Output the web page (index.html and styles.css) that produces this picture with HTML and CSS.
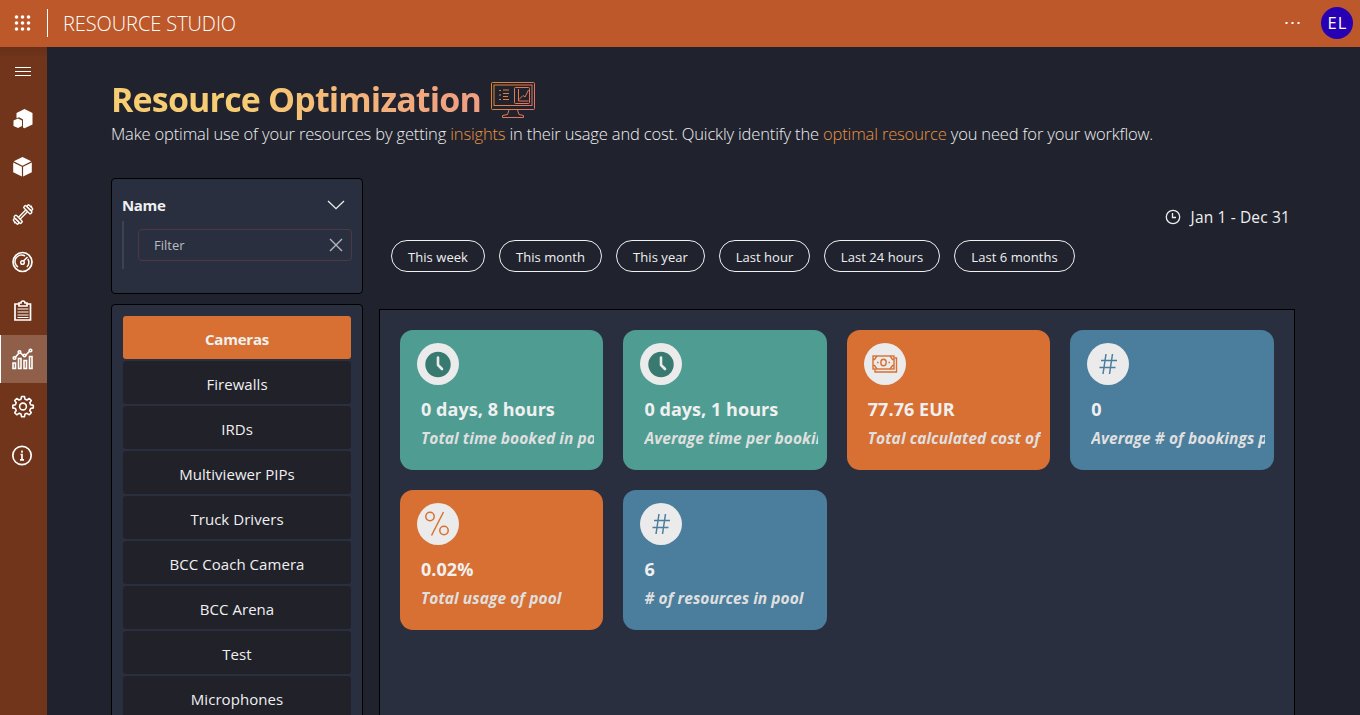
FILE: index.html
```html
<!DOCTYPE html>
<html lang="en">
<head>
<meta charset="utf-8">
<title>Resource Studio</title>
<link rel="stylesheet" href="styles.css">
</head>
<body>
<header class="topbar">
  <svg class="waffle" width="18" height="18" viewBox="0 0 18 18" fill="#fff"><circle cx="2.500" cy="2" r="1.800"/><circle cx="8.500" cy="2" r="1.800"/><circle cx="14.500" cy="2" r="1.800"/><circle cx="2.500" cy="8" r="1.800"/><circle cx="8.500" cy="8" r="1.800"/><circle cx="14.500" cy="8" r="1.800"/><circle cx="2.500" cy="14" r="1.800"/><circle cx="8.500" cy="14" r="1.800"/><circle cx="14.500" cy="14" r="1.800"/></svg>
  <span class="rule"></span>
  <span class="brand">RESOURCE STUDIO</span>
  <svg class="more" width="16" height="2" viewBox="0 0 16 2" fill="#fff"><path d="M.5 0h2v2h-2zM6.500 0h2v2h-2zM12.500 0h2v2h-2z"/></svg>
  <span class="avatar">EL</span>
</header>
<div class="shell">
  <nav class="rail">
    <a class="rail-item"><svg width="24" height="24" viewBox="0 0 24 24" stroke="#fff" stroke-width="1"><path d="M4 8.500h16M4 12.500h16M4 16.500h16"/></svg></a>
    <a class="rail-item"><svg width="24" height="24" viewBox="0 0 24 24" fill="#fff"><path d="M13.500 2l8 4v11.500l-8 3.700-1.500-.7v-8L8 10.300l-2.500 1V6z"/><path d="M7 11.400l4 2v5.500l-4 2-4.500-2v-5.500z"/></svg></a>
    <a class="rail-item"><svg width="24" height="24" viewBox="0 0 24 24" fill="#fff"><path d="M11.500 2l8.800 4.300-8.800 4.400-8.800-4.400zM2.200 7.400l8.700 4.400v9.700l-8.700-4.300zM20.800 7.400l-8.700 4.400v9.700l8.700-4.300z"/></svg></a>
    <a class="rail-item"><svg width="24" height="24" viewBox="0 0 24 24"><g transform="translate(12 11.500) rotate(-45)" fill="none" stroke="#fff" stroke-width="1.400" stroke-linejoin="round"><path d="M-5 -1.200H5M-5 1.200H5"/><rect x="-8.300" y="-4.800" width="3" height="9.600" rx="1"/><rect x="-11" y="-3.200" width="2.700" height="6.400" rx="1"/><rect x="5.300" y="-4.800" width="3" height="9.600" rx="1"/><rect x="8.300" y="-3.200" width="2.700" height="6.400" rx="1"/><path d="M-12.500 0h1.500M11 0h1.500"/></g></svg></a>
    <a class="rail-item"><svg width="24" height="24" viewBox="0 0 24 24" fill="none" stroke="#fff" stroke-width="1.500"><circle cx="11.500" cy="11" r="9.500" stroke-width="1.700"/><path d="M7 16A6.500 6.500 0 0 1 14 5M16.800 8a6.500 6.500 0 0 1-1 8M12.500 10L16.500 6"/><circle cx="11.500" cy="11.500" r="1.800"/></svg></a>
    <a class="rail-item"><svg width="24" height="24" viewBox="0 0 24 24" fill="none" stroke="#fff" stroke-width="1.700"><path d="M8 5H4v16h15.500V5h-4M8 7V4h2a2 2 0 0 1 4 0h2v3z"/><path d="M6.500 10h11M6.500 13h11M6.500 16h11M6.500 18.500h11" stroke-width="1.200"/></svg></a>
    <a class="rail-item active"><svg width="24" height="24" viewBox="0 0 24 24" fill="none" stroke="#fff" stroke-width="1.600"><path d="M2 16h2.500v5.500H2zM7.500 11.500H10v10H7.500zM13 13.500h2.500v8H13zM18.500 9.500H21v12h-2.500zM4.500 10l3.300-3.800M9.500 6l3.300 2.800M14.500 8.500l4-4.300"/><circle cx="3.500" cy="11" r="1.300"/><circle cx="8.500" cy="5" r="1.300"/><circle cx="13.500" cy="8.500" r="1.300"/><circle cx="19.500" cy="3.500" r="1.300"/></svg></a>
    <a class="rail-item"><svg width="24" height="24" viewBox="0 0 24 24" fill="none" stroke="#fff" stroke-width="1.600" stroke-linejoin="round"><path d="M10.600 1.500h2.800l.6 2.700 2 .8 2.300-1.500 2 2-1.500 2.300.8 2 2.700.6v2.500l-2.700.6-.8 2 1.500 2.300-2 2-2.300-1.500-2 .8-.6 2.600h-2.800l-.6-2.600-2-.8-2.300 1.500-2-2 1.500-2.300-.8-2-2.600-.6v-2.500l2.600-.6.800-2-1.500-2.300 2-2L8 5l2-.8z"/><circle cx="12" cy="11.500" r="3.400"/></svg></a>
    <a class="rail-item"><svg width="24" height="24" viewBox="0 0 24 24" fill="none" stroke="#fff" stroke-width="1.700"><circle cx="11" cy="12.500" r="9.200"/><path d="M11 7.500v2.200M9.500 11.500H11V17M9 16.800h4"/></svg></a>
  </nav>
  <main class="page">
    <div class="title-row">
      <h1>Resource Optimization</h1>
      <svg class="monitor" width="46" height="38" viewBox="0 0 46 38" fill="none" stroke="url(#mg)" stroke-width="1"><defs><linearGradient id="mg" gradientUnits="userSpaceOnUse" x1="0" y1="0" x2="46" y2="30"><stop offset="0" stop-color="#dc8728"/><stop offset="1" stop-color="#e0706c"/></linearGradient></defs><rect x="1.500" y="1.500" width="43" height="27" rx="1"/><rect x="4" y="4" width="38" height="20.500"/><rect x="24.500" y="6.500" width="15" height="16" rx="1"/><path d="M28.500 8v12h10M29 18.500l4-4 2 1.500 3.500-7"/><path d="M9 9.500h2M9 14h2M9 18.500h2M13 9h6M13 12.500h6M13 15.500h5M13 18.500h6"/><path d="M19 29l-1.500 4.500-5 1v2h21v-2l-4.500-1L27.500 29"/></svg>
    </div>
    <p class="intro">Make optimal use of your resources by getting <em>insights</em> in their usage and cost. Quickly identify the <em>optimal resource</em> you need for your workflow.</p>
    <div class="columns">
      <aside class="left">
        <section class="panel filter">
          <div class="filter-head"><span>Name</span><svg width="18" height="10" viewBox="0 0 18 10" fill="none" stroke="#eee" stroke-width="1.300"><path d="M1 1l8 7.700L17 1"/></svg></div>
          <div class="filter-body"><div class="field"><span>Filter</span><svg width="14" height="14" viewBox="0 0 14 14" stroke="#b4b7bc" stroke-width="1.400"><path d="M1 1l12 12M13 1L1 13"/></svg></div></div>
        </section>
        <section class="panel list">
          <div class="pool selected">Cameras</div>
          <div class="pool">Firewalls</div>
          <div class="pool">IRDs</div>
          <div class="pool">Multiviewer PIPs</div>
          <div class="pool">Truck Drivers</div>
          <div class="pool">BCC Coach Camera</div>
          <div class="pool">BCC Arena</div>
          <div class="pool">Test</div>
          <div class="pool">Microphones</div>
        </section>
      </aside>
      <section class="right">
        <div class="range"><svg width="16" height="16" viewBox="0 0 16 16" fill="none" stroke="#eee" stroke-width="1.300"><circle cx="8" cy="8" r="6.700"/><path d="M7.500 4v4.500H11"/></svg><span>Jan 1 - Dec 31</span></div>
        <div class="chips">
          <button class="chip week">This week</button><button class="chip month">This month</button><button class="chip year">This year</button><button class="chip hour">Last hour</button><button class="chip day">Last 24 hours</button><button class="chip half">Last 6 months</button>
        </div>
        <div class="board">
          <article class="card green"><span class="badge"><svg width="28" height="28" viewBox="0 0 28 28"><circle cx="14" cy="14.500" r="12.700" fill="#397a70"/><path d="M14 7.500v7.500l4 4" fill="none" stroke="#ebebeb" stroke-width="2.600" stroke-linecap="round" stroke-linejoin="round"/></svg></span><h2>0 days, 8 hours</h2><p>Total time booked in pool</p></article>
          <article class="card green"><span class="badge"><svg width="28" height="28" viewBox="0 0 28 28"><circle cx="14" cy="14.500" r="12.700" fill="#397a70"/><path d="M14 7.500v7.500l4 4" fill="none" stroke="#ebebeb" stroke-width="2.600" stroke-linecap="round" stroke-linejoin="round"/></svg></span><h2>0 days, 1 hours</h2><p>Average time per booking</p></article>
          <article class="card orange"><span class="badge"><svg width="28" height="28" viewBox="0 0 28 28" fill="none" stroke="#d87033" stroke-width="1.400"><rect x="2" y="6" width="21" height="13"/><path d="M4 19.500v2.500h21.500V8H23.500M2 9.500h1.500L6 6M2 15.500h1.500L6 19M23 9.500h-1.500L19 6M23 15.500h-1.500L19 19M6 12.500h1.600M17.500 12.500H19"/><ellipse cx="12.500" cy="12.500" rx="2.700" ry="3.300"/></svg></span><h2>77.76 EUR</h2><p>Total calculated cost of pool</p></article>
          <article class="card blue"><span class="badge"><svg width="28" height="28" viewBox="0 0 28 28" fill="none" stroke="#4b7e9d" stroke-width="1.500"><path d="M12 4L9 24M18.500 4l-3 20M7 10.500h16M5.500 17.500h16"/></svg></span><h2>0</h2><p>Average # of bookings per day</p></article>
          <article class="card orange"><span class="badge"><svg width="28" height="28" viewBox="0 0 28 28" fill="none" stroke="#d87033" stroke-width="1.500"><circle cx="6" cy="6.500" r="4.200"/><circle cx="20" cy="20.500" r="4.200"/><path d="M19.500 2L7.500 25.500"/></svg></span><h2>0.02%</h2><p>Total usage of pool</p></article>
          <article class="card blue"><span class="badge"><svg width="28" height="28" viewBox="0 0 28 28" fill="none" stroke="#4b7e9d" stroke-width="1.500"><path d="M12 4L9 24M18.500 4l-3 20M7 10.500h16M5.500 17.500h16"/></svg></span><h2>6</h2><p># of resources in pool</p></article>
        </div>
      </section>
    </div>
  </main>
</div>
</body>
</html>
```
FILE: styles.css
```css
* { box-sizing: border-box; }
body { margin: 0; height: 715px; overflow: hidden; background: #20232e; color: #f0f0f0; font-family: "Open Sans", "Noto Sans", sans-serif; }
h1, h2, p { margin: 0; }
.topbar { height: 47px; display: flex; align-items: center; background: #bc5829; padding-right: 7px; }
.waffle { margin-left: 14px; }
.rule { width: 1px; height: 28px; background: #fff; margin: -1px 15px 0; }
.brand { font-size: 20px; font-weight: 300; letter-spacing: -0.08px; line-height: 46px; color: #fff; }
.more { margin-left: auto; margin-right: 20px; margin-top: -1px; }
.avatar { width: 32px; height: 32px; margin-top: -1px; border-radius: 50%; background: #2800b4; color: #fff; font-size: 16.500px; line-height: 32px; text-align: center; letter-spacing: 1px; padding-left: 1px; }
.shell { display: flex; height: 668px; }
.rail { width: 47px; flex: none; background: linear-gradient(#66301a, #70351a 10px); }
.rail-item { height: 48px; display: flex; align-items: center; padding-left: 11px; }
.rail-item.active { background: #8f5f49; border-left: 1px solid #fff; padding-left: 10px; }
.page { flex: 1; padding: 33px 65px 0 64px; overflow: hidden; }
.title-row { display: flex; align-items: flex-start; gap: 10px; height: 42px; }
h1 { font-size: 34px; line-height: 39px; height: 42px; font-weight: 700; white-space: nowrap; letter-spacing: -0.85px; width: 370px; color: transparent; background: linear-gradient(90deg, #f7cd73 35%, #f0a080 95%); -webkit-background-clip: text; background-clip: text; }
.monitor { margin-top: 1px; flex: none; margin-left: -1px; }
.intro { font-size: 16.500px; font-weight: 300; line-height: 24px; white-space: nowrap; letter-spacing: -0.155px; }
.intro em { font-style: normal; color: #ea9441; }
.columns { display: flex; gap: 16px; padding-top: 32px; }
.left { width: 252px; flex: none; display: flex; flex-direction: column; gap: 10px; }
.panel { border: 1px solid #000; border-radius: 4px; background: #292f3f; }
.filter { height: 116px; padding: 14px 10px 0; }
.filter-head { height: 24px; display: flex; align-items: center; justify-content: space-between; font-size: 15px; font-weight: 700; letter-spacing: -0.35px; padding-right: 7px; }
.filter-body { margin-top: 4px; height: 48px; border-left: 2px solid #3d4352; padding: 8px 0 0 14px; }
.field { height: 32px; border: 1px solid #4a3a42; border-radius: 4px; display: flex; align-items: center; justify-content: space-between; padding: 0 8px 0 15px; font-size: 13px; color: #b9bcc2; }
.list { padding: 11px; display: flex; flex-direction: column; gap: 2px; height: 500px; }
.pool { height: 43px; flex: none; border-radius: 3px; background: #21212a; text-align: center; font-size: 15px; line-height: 46px; letter-spacing: 0.05px; }
.pool.selected { background: #d87033; font-weight: 700; letter-spacing: -0.2px; }
.right { width: 916px; flex: none; }
.range { height: 62px; display: flex; justify-content: flex-end; align-items: center; gap: 10px; padding: 16px 5px 0 0; font-size: 15.500px; letter-spacing: 0.15px; }
.chips { display: flex; gap: 14px; padding-left: 12px; height: 69px; }
.chip { height: 32px; flex: none; border: 1px solid #f0f0f0; border-radius: 16px; background: none; color: #f0f0f0; font: 13px/30px "Open Sans", "Noto Sans", sans-serif; letter-spacing: 0.05px; padding: 1px 0 0; white-space: nowrap; }
.week { width: 94px; }
.month { width: 103px; }
.year { width: 89px; }
.hour { width: 91px; }
.day { width: 116px; }
.half { width: 121px; }
.board { border: 1px solid #000; background: #292f3f; height: 500px; padding: 20px; display: grid; grid-template-columns: repeat(4, 203.400px); grid-auto-rows: 140px; gap: 20px; align-content: start; }
.card { border-radius: 13px; padding: 13px 9px 0 17px; overflow: hidden; }
.green { background: #4f9d92; }
.orange { background: #d87033; }
.blue { background: #4b7e9d; }
.badge { width: 42px; height: 42px; border-radius: 50%; background: #ebebeb; display: flex; align-items: center; justify-content: center; }
.card h2 { margin: 11px 0 0 4px; font-size: 18px; line-height: 27px; font-weight: 700; white-space: nowrap; letter-spacing: 0.05px; }
.card p { margin: 3px 0 0 4px; font-size: 15.500px; line-height: 24px; font-style: italic; font-weight: 700; letter-spacing: 0.06px; color: #dfdfdf; white-space: nowrap; overflow: hidden; }
```
